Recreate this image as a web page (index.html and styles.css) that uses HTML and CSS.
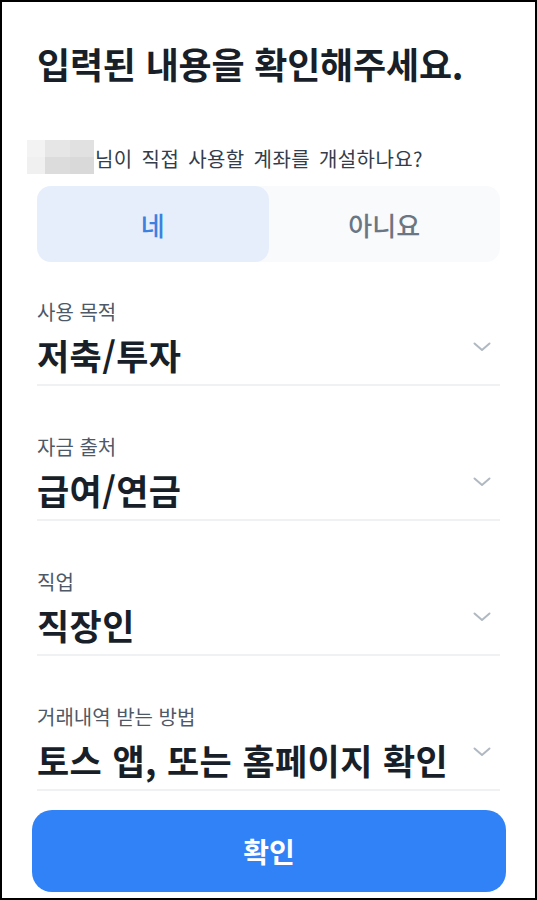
FILE: index.html
```html
<!DOCTYPE html>
<html lang="ko">
<head>
    <meta charset="UTF-8">
    <meta name="viewport" content="width=device-width, initial-scale=1.0">
    <title>입력된 내용을 확인해주세요</title>
    <link rel="stylesheet" href="styles.css">
</head>
<body>
    <div class="screen">
        <div class="page">
            <h1 class="title">입력된 내용을 확인해주세요.</h1>

            <div class="question">
                <span class="name-blur">
                    <i class="c1"></i><i class="c2"></i><i class="c3"></i>
                    <i class="c4"></i><i class="c5"></i><i class="c6"></i>
                </span>
                <span class="question-text">님이 직접 사용할 계좌를 개설하나요?</span>
            </div>

            <div class="segment">
                <button class="segment-btn active">네</button>
                <button class="segment-btn">아니요</button>
            </div>

            <div class="field first">
                <div class="field-label">사용 목적</div>
                <div class="field-row">
                    <div class="field-value">저축/투자</div>
                    <svg class="chevron" width="18" height="10" viewBox="0 0 18 10"><path d="M1.5 1.5 L9 8 L16.5 1.5" fill="none" stroke="#b0b8c1" stroke-width="2" stroke-linecap="round" stroke-linejoin="round"/></svg>
                </div>
            </div>

            <div class="field">
                <div class="field-label">자금 출처</div>
                <div class="field-row">
                    <div class="field-value">급여/연금</div>
                    <svg class="chevron" width="18" height="10" viewBox="0 0 18 10"><path d="M1.5 1.5 L9 8 L16.5 1.5" fill="none" stroke="#b0b8c1" stroke-width="2" stroke-linecap="round" stroke-linejoin="round"/></svg>
                </div>
            </div>

            <div class="field">
                <div class="field-label">직업</div>
                <div class="field-row">
                    <div class="field-value">직장인</div>
                    <svg class="chevron" width="18" height="10" viewBox="0 0 18 10"><path d="M1.5 1.5 L9 8 L16.5 1.5" fill="none" stroke="#b0b8c1" stroke-width="2" stroke-linecap="round" stroke-linejoin="round"/></svg>
                </div>
            </div>

            <div class="field">
                <div class="field-label">거래내역 받는 방법</div>
                <div class="field-row">
                    <div class="field-value">토스 앱, 또는 홈페이지 확인</div>
                    <svg class="chevron" width="18" height="10" viewBox="0 0 18 10"><path d="M1.5 1.5 L9 8 L16.5 1.5" fill="none" stroke="#b0b8c1" stroke-width="2" stroke-linecap="round" stroke-linejoin="round"/></svg>
                </div>
            </div>
        </div>

        <div class="footer">
            <button class="confirm-btn">확인</button>
        </div>
    </div>
</body>
</html>
```

FILE: styles.css
```css
* {
    box-sizing: border-box;
}
body {
    margin: 0;
    font-family: "Noto Sans CJK KR", "Noto Sans", sans-serif;
    background: #fff;
}
.screen {
    width: 537px;
    height: 900px;
    border: 2px solid #000;
    overflow: hidden;
    display: flex;
    flex-direction: column;
}
.page {
    padding: 0 35px;
    display: flex;
    flex-direction: column;
}
.title {
    margin: 38px 0 0;
    font-size: 36px;
    line-height: 46px;
    font-weight: 700;
    color: #191f28;
    letter-spacing: -0.2px;
}
.question {
    margin: 54px 0 0 -10px;
    display: flex;
    align-items: center;
    height: 34px;
}
.name-blur {
    display: grid;
    grid-template-columns: 18px 25px 24px;
    grid-template-rows: 17px 17px;
    margin-right: 1px;
}
.name-blur i {
    display: block;
}
.c1 { background: #f3f3f3; }
.c2 { background: #e6e6e6; }
.c3 { background: #e1e1e1; }
.c4 { background: #f0f0f0; }
.c5 { background: #dcdcdc; }
.c6 { background: #d9d9d9; }
.question-text {
    font-size: 20px;
    line-height: 34px;
    color: #333d4b;
    padding-top: 3px;
    letter-spacing: 0.4px;
    word-spacing: 3px;
}
.segment {
    margin-top: 12px;
    height: 76px;
    display: flex;
    background: #f9fafb;
    border-radius: 14px;
}
.segment-btn {
    flex: 1;
    border: none;
    background: transparent;
    border-radius: 14px;
    font-family: inherit;
    font-size: 26px;
    font-weight: 500;
    color: #6b7684;
}
.segment-btn.active {
    background: #e6eefb;
    color: #3d80e0;
}
.field {
    margin-top: 49px;
    padding-bottom: 8px;
    border-bottom: 2px solid #f0f1f3;
}
.field.first {
    margin-top: 38px;
}
.field-label {
    font-size: 20px;
    line-height: 24px;
    color: #4e5968;
}
.field-row {
    margin-top: 10px;
    display: flex;
    justify-content: space-between;
    align-items: flex-start;
}
.field-value {
    font-size: 35px;
    line-height: 42px;
    font-weight: 700;
    color: #191f28;
    letter-spacing: 0.4px;
}
.chevron {
    margin: 8px 9px 0 0;
    flex-shrink: 0;
}
.footer {
    padding: 0 29px 0 30px;
    margin-top: 19px;
}
.confirm-btn {
    display: block;
    width: 100%;
    height: 82px;
    border: none;
    border-radius: 20px;
    background: #3182f6;
    color: #fff;
    font-family: inherit;
    font-size: 28px;
    font-weight: 600;
}
```
